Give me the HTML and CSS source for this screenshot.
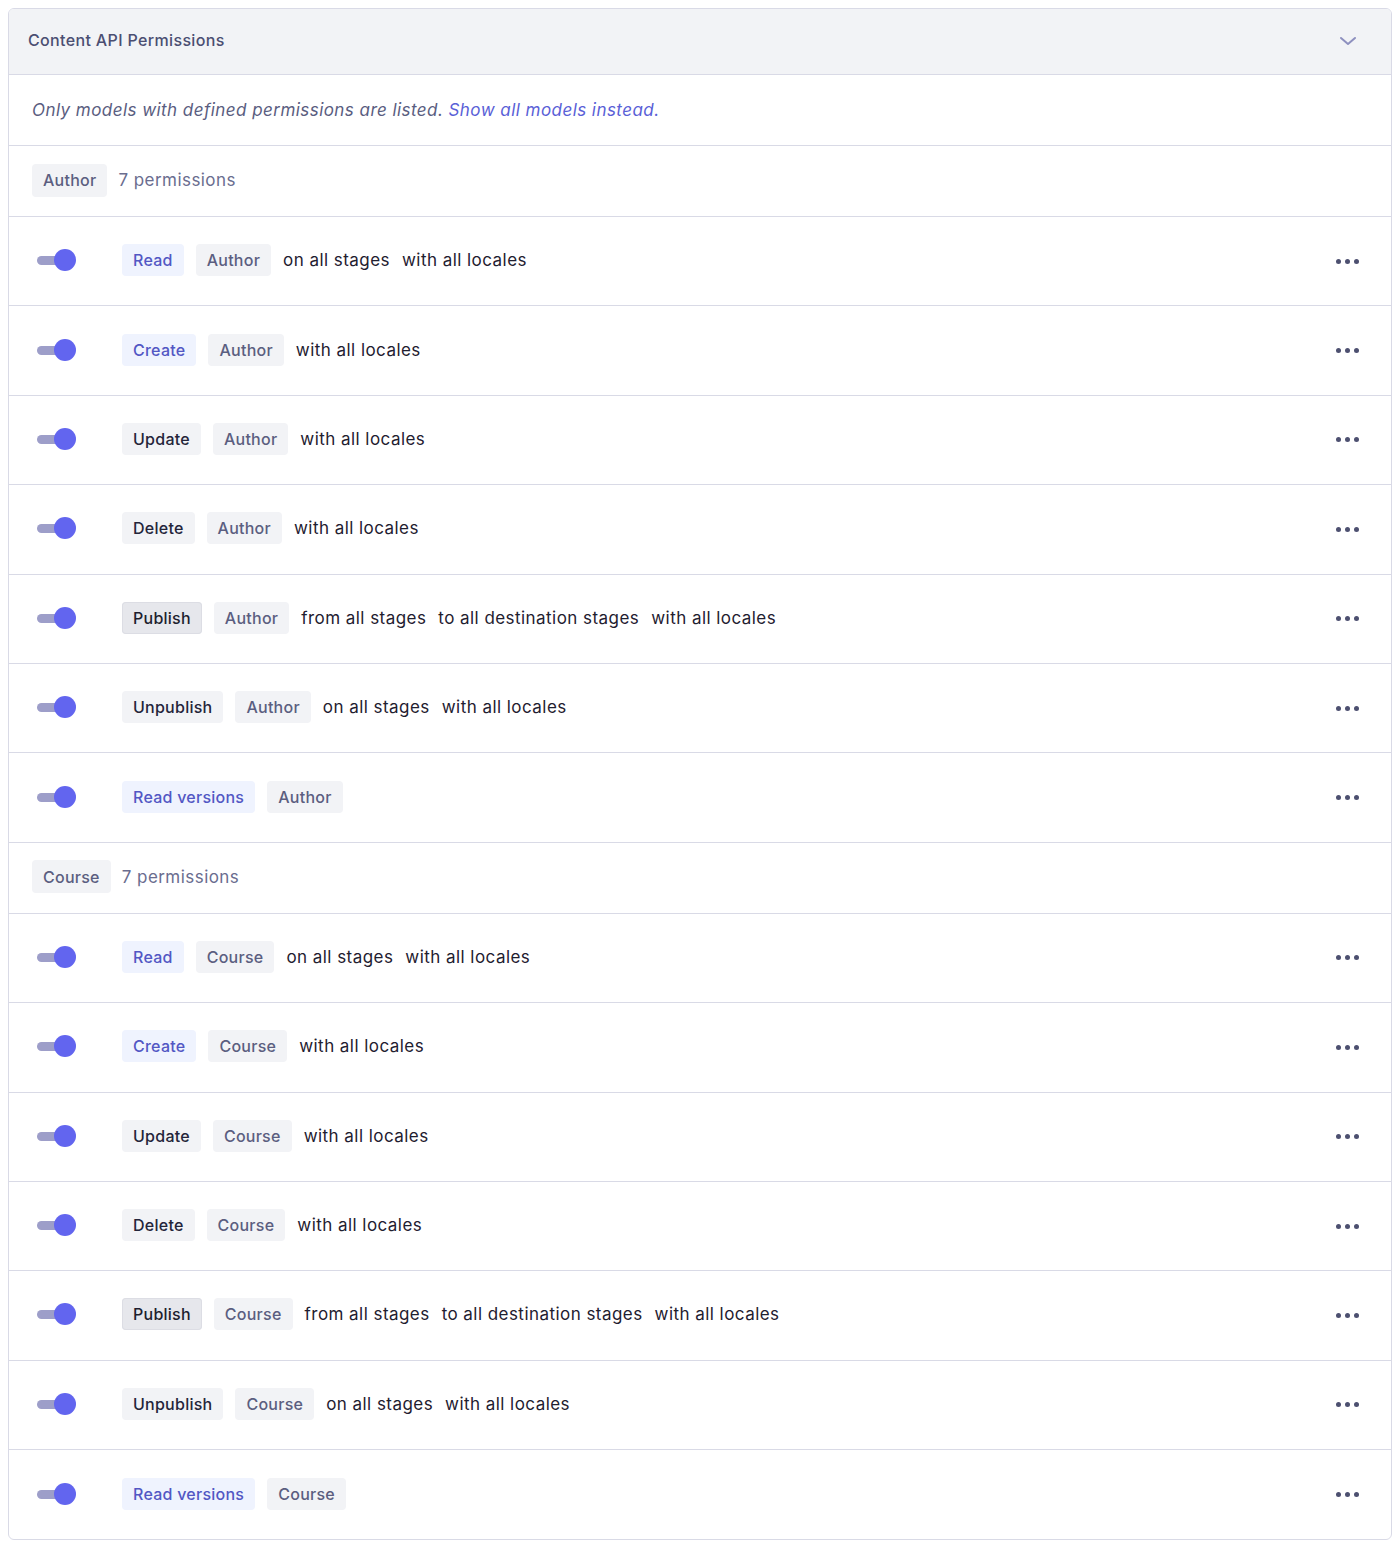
FILE: index.html
```html
<!DOCTYPE html>
<html>
<head>
<meta charset="utf-8">
<link rel="stylesheet" href="styles.css">
</head>
<body>
<div class="panel">
  <div class="panel-head">
    <span class="panel-title">Content API Permissions</span>
    <svg class="chevron" width="18" height="12" viewBox="0 0 18 12"><path d="M2 3l7 6 7-6" fill="none" stroke="#8e90bf" stroke-width="2" stroke-linecap="round" stroke-linejoin="round"/></svg>
  </div>
  <div class="info">Only models with defined permissions are listed. <a class="link">Show all models instead.</a></div>

  <div class="group"><span class="badge model">Author</span><span class="count">7 permissions</span></div>
  <div class="row"><span class="toggle"><span class="track"></span><span class="knob"></span></span><div class="items"><span class="badge act-blue">Read</span><span class="badge model">Author</span><span class="txt">on all stages</span><span class="txt">with all locales</span></div><span class="dots"><i></i><i></i><i></i></span></div>
  <div class="row"><span class="toggle"><span class="track"></span><span class="knob"></span></span><div class="items"><span class="badge act-blue">Create</span><span class="badge model">Author</span><span class="txt">with all locales</span></div><span class="dots"><i></i><i></i><i></i></span></div>
  <div class="row"><span class="toggle"><span class="track"></span><span class="knob"></span></span><div class="items"><span class="badge act-grey">Update</span><span class="badge model">Author</span><span class="txt">with all locales</span></div><span class="dots"><i></i><i></i><i></i></span></div>
  <div class="row"><span class="toggle"><span class="track"></span><span class="knob"></span></span><div class="items"><span class="badge act-grey">Delete</span><span class="badge model">Author</span><span class="txt">with all locales</span></div><span class="dots"><i></i><i></i><i></i></span></div>
  <div class="row"><span class="toggle"><span class="track"></span><span class="knob"></span></span><div class="items"><span class="badge act-dark">Publish</span><span class="badge model">Author</span><span class="txt">from all stages</span><span class="txt">to all destination stages</span><span class="txt">with all locales</span></div><span class="dots"><i></i><i></i><i></i></span></div>
  <div class="row"><span class="toggle"><span class="track"></span><span class="knob"></span></span><div class="items"><span class="badge act-grey">Unpublish</span><span class="badge model">Author</span><span class="txt">on all stages</span><span class="txt">with all locales</span></div><span class="dots"><i></i><i></i><i></i></span></div>
  <div class="row"><span class="toggle"><span class="track"></span><span class="knob"></span></span><div class="items"><span class="badge act-blue">Read versions</span><span class="badge model">Author</span></div><span class="dots"><i></i><i></i><i></i></span></div>

  <div class="group"><span class="badge model">Course</span><span class="count">7 permissions</span></div>
  <div class="row"><span class="toggle"><span class="track"></span><span class="knob"></span></span><div class="items"><span class="badge act-blue">Read</span><span class="badge model">Course</span><span class="txt">on all stages</span><span class="txt">with all locales</span></div><span class="dots"><i></i><i></i><i></i></span></div>
  <div class="row"><span class="toggle"><span class="track"></span><span class="knob"></span></span><div class="items"><span class="badge act-blue">Create</span><span class="badge model">Course</span><span class="txt">with all locales</span></div><span class="dots"><i></i><i></i><i></i></span></div>
  <div class="row"><span class="toggle"><span class="track"></span><span class="knob"></span></span><div class="items"><span class="badge act-grey">Update</span><span class="badge model">Course</span><span class="txt">with all locales</span></div><span class="dots"><i></i><i></i><i></i></span></div>
  <div class="row"><span class="toggle"><span class="track"></span><span class="knob"></span></span><div class="items"><span class="badge act-grey">Delete</span><span class="badge model">Course</span><span class="txt">with all locales</span></div><span class="dots"><i></i><i></i><i></i></span></div>
  <div class="row"><span class="toggle"><span class="track"></span><span class="knob"></span></span><div class="items"><span class="badge act-dark">Publish</span><span class="badge model">Course</span><span class="txt">from all stages</span><span class="txt">to all destination stages</span><span class="txt">with all locales</span></div><span class="dots"><i></i><i></i><i></i></span></div>
  <div class="row"><span class="toggle"><span class="track"></span><span class="knob"></span></span><div class="items"><span class="badge act-grey">Unpublish</span><span class="badge model">Course</span><span class="txt">on all stages</span><span class="txt">with all locales</span></div><span class="dots"><i></i><i></i><i></i></span></div>
  <div class="row last"><span class="toggle"><span class="track"></span><span class="knob"></span></span><div class="items"><span class="badge act-blue">Read versions</span><span class="badge model">Course</span></div><span class="dots"><i></i><i></i><i></i></span></div>
</div>
</body>
</html>
```

FILE: styles.css
```css
* { box-sizing: border-box; }
body {
  margin: 8px;
  font-family: Inter, "Noto Sans", sans-serif;
  background: #ffffff;
  color: #1f2030;
}
.panel {
  width: 1384px;
  border: 1px solid #d9dae6;
  border-radius: 6px;
  overflow: hidden;
}
.panel-head {
  height: 66px;
  background: #f2f3f6;
  border-bottom: 1px solid #d9dae6;
  display: flex;
  align-items: center;
  justify-content: space-between;
  padding: 0 34px 3px 19px;
}
.panel-title {
  font-size: 16px;
  font-weight: 500;
  letter-spacing: 0.35px;
  color: #4b4e72;
}
.chevron { display: block; margin-top: 2px; }
.info {
  height: 71px;
  border-bottom: 1px solid #d9dae6;
  display: flex;
  align-items: center;
  padding-left: 23px;
  padding-bottom: 1px;
  font-size: 17px;
  letter-spacing: 0.45px;
  font-style: italic;
  color: #5a5d7f;
  white-space: pre;
}
.link { color: #5a5fd7; }
.group {
  height: 71px;
  border-bottom: 1px solid #d9dae6;
  display: flex;
  align-items: center;
  padding-left: 23px;
  padding-bottom: 2px;
  gap: 11px;
}
.count {
  font-size: 17px;
  letter-spacing: 0.45px;
  color: #6a6d8f;
}
.row {
  height: 89.4px;
  border-bottom: 1px solid #d9dae6;
  display: flex;
  align-items: center;
  padding-left: 28px;
  padding-right: 32px;
  padding-bottom: 2px;
}
.row.last { border-bottom: none; }
.toggle {
  position: relative;
  width: 40px;
  height: 22px;
  flex: none;
}
.track {
  position: absolute;
  left: 0;
  top: 7px;
  width: 30px;
  height: 9px;
  border-radius: 5px;
  background: #9d9ec9;
}
.knob {
  position: absolute;
  left: 17px;
  top: 0;
  width: 22px;
  height: 22px;
  border-radius: 50%;
  background: #6265ef;
}
.items {
  display: flex;
  align-items: center;
  margin-left: 45px;
  gap: 12px;
  flex: 1;
}
.badge {
  display: inline-flex;
  align-items: center;
  height: 32px;
  padding: 0 11px;
  border-radius: 4px;
  font-size: 16px;
  font-weight: 500;
  letter-spacing: 0.25px;
  white-space: nowrap;
}
.model {
  background: #f2f3f6;
  color: #5b5e80;
}
.group .model { height: 33px; }
.act-blue {
  background: #eff3fe;
  color: #5257c4;
}
.act-grey {
  background: #f2f3f6;
  color: #24253a;
}
.act-dark {
  background: #e6e7ec;
  color: #1d1e2e;
  box-shadow: inset 0 0 0 1px #dcdde4;
}
.txt {
  font-size: 17px;
  letter-spacing: 0.45px;
  color: #1f2030;
  white-space: nowrap;
}
.dots {
  display: flex;
  gap: 4px;
  flex: none;
  margin-top: 2px;
}
.dots i {
  width: 5px;
  height: 5px;
  border-radius: 50%;
  background: #4d5070;
}
```
